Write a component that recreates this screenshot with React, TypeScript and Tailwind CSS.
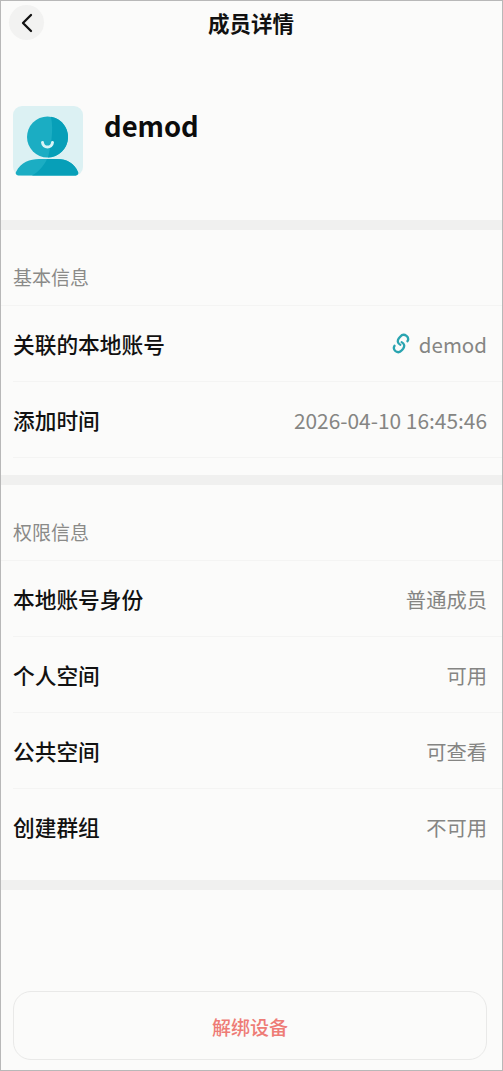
import React from 'react'

interface RowProps {
  label: string
  value: string
  linked?: boolean
  last?: boolean
}

const basicInfo: RowProps[] = [
  { label: '关联的本地账号', value: 'demod', linked: true },
  { label: '添加时间', value: '2026-04-10 16:45:46' },
]

const permissionInfo: RowProps[] = [
  { label: '本地账号身份', value: '普通成员' },
  { label: '个人空间', value: '可用' },
  { label: '公共空间', value: '可查看' },
  { label: '创建群组', value: '不可用', last: true },
]

const Avatar: React.FC = () => (
  <svg className="h-[70px] w-[70px]" viewBox="0 0 70 70" fill="none">
    <rect width="70" height="70" rx="9" fill="#dcf1f3" />
    <circle cx="34.5" cy="31" r="20.5" fill="#1badc3" />
    <path d="M38 10.800a20.500 20.500 0 0 1-3 40.700C37.500 42 41 25 38 10.800z" fill="#079fb8" />
    <path d="M3 66C8 56 17 53 26 53h18c10 0 17 4 21 13 1 2-1 3.500-3 3.500H6c-2 0-4-1.500-3-3.500z" fill="#1badc3" />
    <path d="M34 53h10c10 0 17 4 21 13 1 2-1 3.500-3 3.500H19c7-4 12-10 15-16.500z" fill="#079fb8" />
    <path d="M29.500 36.500c.5 6 9.500 6 10 0" stroke="#d9f5f7" strokeWidth="3" strokeLinecap="round" />
  </svg>
)

const ChainIcon: React.FC = () => (
  <svg
    className="mb-0.5 h-[21px] w-[18px]"
    viewBox="0 0 18 21"
    fill="none"
    stroke="#29a4b0"
    strokeWidth="2.300"
    strokeLinecap="round"
  >
    <path d="M8.300 11.800C5.700 10.700 5 7.700 6.900 5.200l1.300-1.500c1.700-2 4.300-2.300 6.300-.8 1.700 1.400 2 3.600 1 5.300" />
    <path d="M9.700 9.200c2.600 1.100 3.300 4.100 1.400 6.600l-1.300 1.500c-1.700 2-4.300 2.300-6.300.8-1.700-1.400-2-3.600-1-5.300" />
  </svg>
)

const Row: React.FC<RowProps> = ({ label, value, linked, last }) => (
  <div
    className={`ml-3 flex h-[76px] items-center justify-between border-b pt-0.5 pr-[15px] ${
      last ? 'border-transparent' : 'border-[#f4f4f3]'
    }`}
  >
    <span className="text-[21.700px] font-medium text-[#111]">{label}</span>
    <span className="flex items-center gap-[9px] text-[#858583]">
      {linked && <ChainIcon />}
      <span className={linked ? 'text-[20.500px]' : /^[\d\s:-]+$/.test(value) ? 'text-[20.900px]' : 'text-[20.300px]'}>
        {value}
      </span>
    </span>
  </div>
)

const Section: React.FC<{ title: string; rows: RowProps[] }> = ({ title, rows }) => (
  <section className="border-t-[10px] border-[#f0f0ef]">
    <h2 className="flex h-[76px] items-center border-b border-[#f4f4f3] pt-5 pl-3 text-[19px] text-[#8a8a88]">
      {title}
    </h2>
    {rows.map((row) => (
      <Row key={row.label} {...row} />
    ))}
  </section>
)

const App: React.FC = () => {
  return (
    <div className="flex h-screen flex-col border border-[#b8b8b8] bg-[#fbfbfa] font-['Noto_Sans_CJK_SC',sans-serif] leading-normal">
      <header className="grid h-[43px] grid-cols-[80px_1fr_80px] items-center">
        <button className="ml-2 flex h-[35px] w-[35px] items-center justify-center rounded-full bg-[#f2f2f1]">
          <svg width="12" height="20" viewBox="0 0 12 20" fill="none" stroke="#111" strokeWidth="2.300">
            <path d="M10 2 2 10l8 8" strokeLinecap="round" strokeLinejoin="round" />
          </svg>
        </button>
        <h1 className="pt-0.5 pr-px text-center text-[21.500px] font-bold text-[#111]">成员详情</h1>
      </header>

      <div className="flex h-[176px] items-start gap-[21px] pt-[62px] pl-3">
        <Avatar />
        <span className="text-[27.400px] leading-[38px] font-bold text-[#0c0c0c]">demod</span>
      </div>

      <Section title="基本信息" rows={basicInfo} />
      <div className="h-[17px]" />
      <Section title="权限信息" rows={permissionInfo} />
      <div className="h-[15px]" />
      <div className="h-[10px] bg-[#f0f0ef]" />

      <div className="mt-auto pr-[15px] pb-[10px] pl-3">
        <button className="h-[69px] w-full rounded-[18px] border border-[#e9e9e8] pt-1 text-[19px] font-medium text-[#ee7c76]">
          解绑设备
        </button>
      </div>
    </div>
  )
}

export default App
